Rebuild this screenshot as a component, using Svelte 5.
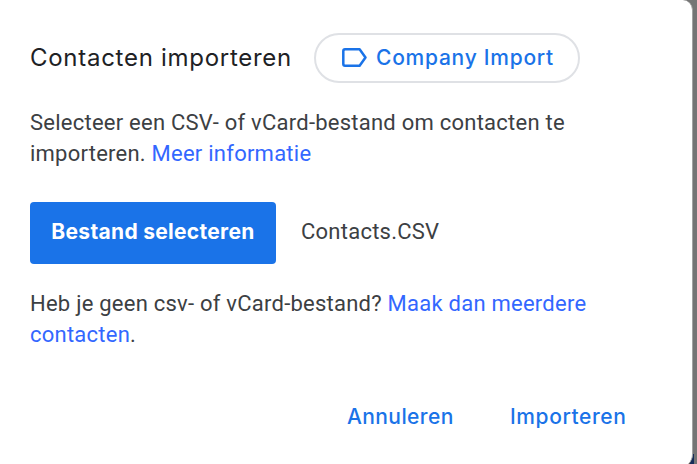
<script>
  let fileName = 'Contacts.CSV';
  let label = 'Company Import';
</script>

<div class="backdrop">
  <div class="page-strip"></div>
  <div class="dialog" role="dialog" aria-labelledby="import-title">
    <header class="header">
      <h1 class="title" id="import-title"><span>Contacten importeren</span></h1>
      <button class="chip">
        <svg class="label-icon" width="25" height="19" viewBox="0 0 25 19" aria-hidden="true">
          <path d="M3 1.3H17.6L23.5 9.5L17.6 17.7H3Q1.3 17.7 1.3 16V3Q1.3 1.3 3 1.3Z" />
        </svg>
        <span class="chip-text">{label}</span>
      </button>
    </header>

    <p class="intro">
      <span class="intro-first">Selecteer een CSV- of vCard-bestand om contacten te</span><br />
      <span class="intro-second">importeren. <a href="#info">Meer informatie</a></span>
    </p>

    <div class="file-row">
      <button class="select-file"><span>Bestand selecteren</span></button>
      <span class="file-name">{fileName}</span>
    </div>

    <p class="hint">
      <span class="hint-first">Heb je geen csv- of vCard-bestand? <a href="#create">Maak dan meerdere</a></span><br />
      <span class="hint-second"><a href="#create">contacten</a>.</span>
    </p>

    <footer class="actions">
      <button class="action cancel">Annuleren</button>
      <button class="action import">Importeren</button>
    </footer>
  </div>
</div>

<style>
  :global(body) {
    margin: 0;
    overflow: hidden;
  }

  .backdrop {
    position: relative;
    box-sizing: border-box;
    width: 697px;
    height: 464px;
    background: #757575;
    overflow: hidden;
  }

  /* bit of the page that shows below the dialog's corner */
  .page-strip {
    position: absolute;
    right: 3px;
    bottom: 0;
    width: 8px;
    height: 10px;
    background: linear-gradient(to right, #30241f 55%, #172c59 56%);
  }

  .dialog {
    position: relative;
    display: flex;
    flex-direction: column;
    box-sizing: border-box;
    width: 693px;
    height: 468px;
    padding: 33px 0 0 30px;
    background: #fff;
    border-right: 1px solid #a3a3a3;
    border-radius: 0 10px 14px 0;
    font-family: Roboto, sans-serif;
    color: #3c4043;
  }

  button {
    padding: 0;
    border: none;
    background: none;
    font-family: Inter, sans-serif;
    cursor: pointer;
  }

  a {
    color: #3367ff;
    text-decoration: none;
  }

  .header {
    display: flex;
    align-items: center;
    height: 50px;
  }

  .title {
    width: 284px;
    margin: 0;
    font: 400 24px/48px Inter, sans-serif;
    letter-spacing: 0.72px;
    color: #202124;
    white-space: nowrap;
  }

  .chip {
    display: flex;
    align-items: center;
    box-sizing: border-box;
    width: 266px;
    height: 50px;
    padding-left: 26px;
    border: 2px solid #dfe1e5;
    border-radius: 25px;
    color: #1a73e8;
  }

  .label-icon {
    flex: none;
    margin-top: -1px;
    margin-right: 9px;
  }

  .label-icon path {
    fill: none;
    stroke: #1a73e8;
    stroke-width: 2.5;
    stroke-linejoin: round;
  }

  .chip-text {
    margin-top: -1px;
    font-size: 21px;
    font-weight: 500;
    line-height: 46px;
    letter-spacing: 0.75px;
    white-space: nowrap;
  }

  .intro,
  .hint {
    margin: 0;
    font-size: 22px;
    line-height: 31px;
    letter-spacing: 0.24px;
    white-space: nowrap;
  }

  .intro {
    margin-top: 24px;
  }

  .file-row {
    display: flex;
    align-items: center;
    height: 62px;
    margin: 33px 0 24px;
  }

  .select-file {
    width: 246px;
    height: 62px;
    margin-right: 25px;
    padding-bottom: 3px;
    border-radius: 4px;
    background: #1a73e8;
    color: #fff;
    font-size: 21px;
    font-weight: 700;
    letter-spacing: 0.3px;
    white-space: nowrap;
  }

  .file-name {
    margin-top: -3px;
    font-size: 22px;
    letter-spacing: 0.24px;
  }

  .actions {
    display: flex;
    margin-top: 50px;
    padding-left: 317px;
  }

  .action {
    font-size: 21px;
    font-weight: 500;
    line-height: 33px;
    letter-spacing: 0.6px;
    color: #1a73e8;
    text-align: left;
  }

  .cancel {
    width: 163px;
    letter-spacing: 0.4px;
  }
</style>
